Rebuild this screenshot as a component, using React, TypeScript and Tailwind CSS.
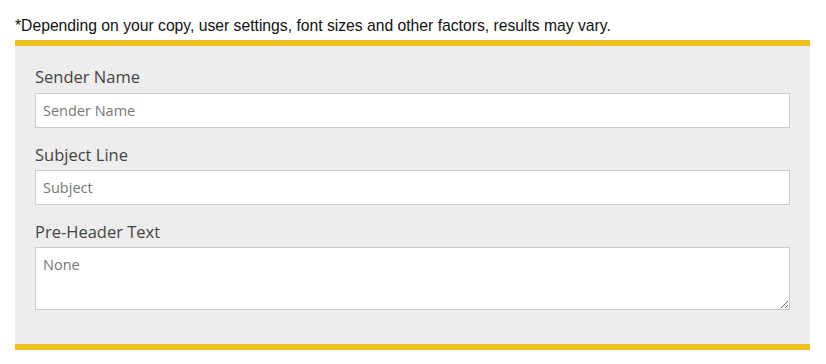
import React from "react";

export default function App() {
  const font = { fontFamily: '"Open Sans", "Lato", sans-serif' };
  return (
    <div className="w-[826px] h-[364px] bg-white" style={font}>
      <div className="pl-[15px] pr-[16px]">
        <p
          className="pt-[17px] h-[40px] text-[15.7px] leading-[18px] text-[#111]"
          style={{ fontFamily: '"Liberation Sans", Arial, sans-serif' }}
        >
          *Depending on your copy, user settings, font sizes and other factors, results may vary.
        </p>
        <div className="border-y-[6px] border-[#efc021] bg-[#ededed] px-[20px] pt-[20px] pb-[34px]">
          <label className="block text-[16.5px] leading-[22px] text-[#444] mb-[5px]">Sender Name</label>
          <input
            className="block w-full h-[35px] border border-[#ccc] bg-white px-[7px] text-[14.5px] text-[#555] placeholder:text-[#777] outline-none"
            placeholder="Sender Name"
            style={font}
          />
          <label className="block text-[16.5px] leading-[22px] text-[#444] mt-[16px] mb-[4px]">Subject Line</label>
          <input
            className="block w-full h-[35px] border border-[#ccc] bg-white px-[7px] text-[14.5px] text-[#555] placeholder:text-[#777] outline-none"
            placeholder="Subject"
            style={font}
          />
          <label className="block text-[16.5px] leading-[22px] text-[#444] mt-[16px] mb-[4px]">Pre-Header Text</label>
          <textarea
            className="block w-full h-[63px] border border-[#ccc] bg-white px-[7px] pt-[7px] text-[14.5px] leading-[20px] text-[#555] placeholder:text-[#777] outline-none"
            placeholder="None"
            style={font}
          />
        </div>
      </div>
    </div>
  );
}
